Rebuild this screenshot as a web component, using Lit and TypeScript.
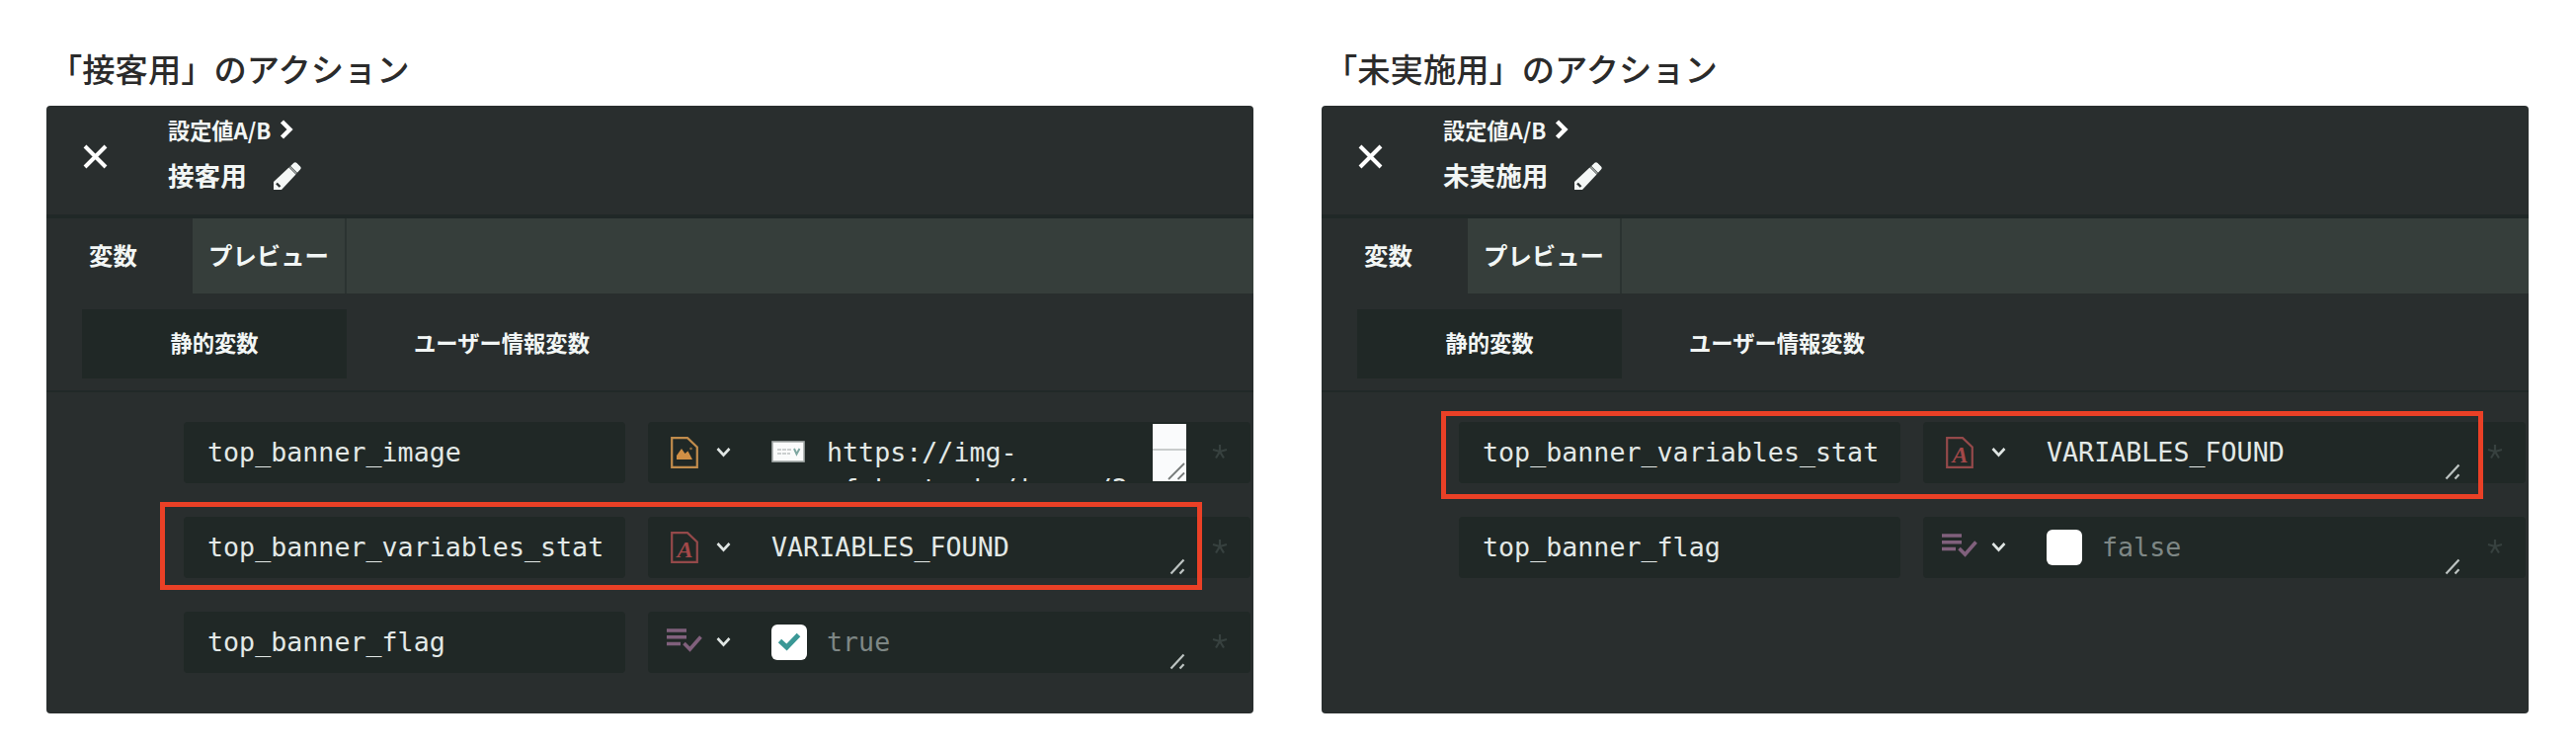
import { LitElement, html, css, svg, nothing } from 'lit';
import { customElement, property } from 'lit/decorators.js';

type VariableType = 'image' | 'text' | 'boolean';

interface Variable {
  name: string;
  type: VariableType;
  value: string | boolean;
  marked?: boolean;
}

const CLOSE = svg`<path d="M2 2 L23 23 M23 2 L2 23" stroke="#fff" stroke-width="4" />`;

@customElement('type-icon')
export class TypeIcon extends LitElement {
  static styles = css`
    :host {
      display: block;
      width: 38px;
      height: 36px;
    }

    svg {
      display: block;
    }

    .letter {
      font: italic bold 24px 'Liberation Serif', serif;
    }
  `;

  @property() type: VariableType = 'text';

  _page(color: string) {
    return svg`<path d="M6.2 3.2 H22 L31.8 12.4 V32.8 H6.2 Z" fill="none" stroke=${color} stroke-width="2.2" />`;
  }

  _shape() {
    switch (this.type) {
      case 'image':
        return svg`
          ${this._page('#c18c4c')}
          <path d="M11 25 V21 L16 14 L19.5 19 L22.5 16.5 L27 25 Z" fill="#d08f45" />
          <circle cx="25.5" cy="14" r="1.3" fill="#8c6a3e" />`;
      case 'boolean':
        return svg`
          <path d="M1 6 H21 M1 12.7 H21 M1 19.5 H15" stroke="#80607c" stroke-width="3.4" />
          <path d="M18.5 19 L24.5 25 L35.5 12.5" fill="none" stroke="#80607c" stroke-width="3.6" />`;
      default:
        return svg`
          ${this._page('#94494a')}
          <text class="letter" x="11.5" y="27.5" fill="#a34849">A</text>`;
    }
  }

  render() {
    return html`<svg width="38" height="36" viewBox="0 0 38 36">${this._shape()}</svg>`;
  }
}

@customElement('variable-row')
export class VariableRow extends LitElement {
  static styles = css`
    :host {
      display: flex;
      position: relative;
      gap: 23px;
      height: 62px;
      font-family: 'DejaVu Sans Mono', monospace;
      font-size: 26.67px;
      font-weight: 400;
      line-height: 37px;
      color: #e3e9e7;
    }

    svg {
      display: block;
    }

    .name,
    .value {
      box-sizing: border-box;
      height: 62px;
      background: #202826;
      border-radius: 4px;
      overflow: hidden;
    }

    .name {
      width: 447px;
      padding: 12px 20px 0 24px;
    }

    .value {
      display: flex;
      width: 610px;
      padding-left: 18px;
    }

    type-icon {
      margin-top: 13px;
    }

    .arrow {
      margin: 25px 41px 0 13px;
      width: 15px;
      height: 11px;
    }

    .content {
      display: flex;
      width: 386px;
      height: 60px;
    }

    .string {
      padding-top: 12px;
      white-space: pre;
    }

    .url {
      width: 329px;
      height: 48px;
      overflow: hidden;
    }

    .thumb {
      flex: none;
      margin: 19px 22px 0 0;
    }

    .check {
      flex: none;
      box-sizing: border-box;
      width: 36px;
      height: 36px;
      margin: 13px 20px 0 0;
      border-radius: 6px;
      background: #fff;
    }

    .flag {
      color: #7e8785;
    }

    .scroll {
      flex: none;
      width: 34px;
      height: 58px;
      margin-top: 2px;
      background: linear-gradient(#c9cccc, #c9cccc) 0 25px / 100% 2px no-repeat #fafbfc;
    }

    .end {
      display: flex;
      width: 34px;
    }

    .grip {
      align-self: flex-end;
      margin-bottom: 3px;
    }

    .required {
      flex: none;
      margin: 22px 0 0 26px;
    }

    .mark {
      position: absolute;
      box-sizing: border-box;
      width: 1055px;
      height: 89px;
      border: 5px solid #ea4026;
    }

    .mark.middle {
      left: -24px;
      top: -15px;
    }

    .mark.first {
      left: -18px;
      top: -11px;
    }
  `;

  @property({ attribute: false }) variable!: Variable;
  @property({ type: Boolean }) first = false;

  _content() {
    const { type, value } = this.variable;

    if (type === 'image') {
      return html`
        <svg class="thumb" width="34" height="22" viewBox="0 0 34 22">
          <rect x="1" y="1" width="32" height="20" fill="#fafbfb" stroke="#a7adac" stroke-width="1.6" />
          <path d="M6 9 H20 M6 13 H19" stroke="#bcc1c1" stroke-width="1.6" stroke-dasharray="4 1" />
          <path d="M23 8 L25.5 13.5 L28.5 8" fill="none" stroke="#7fa8a2" stroke-width="2" />
        </svg>
        <div class="string url">${value}</div>
      `;
    }

    if (type === 'boolean') {
      return html`
        <div class="check">
          ${value
            ? html`<svg width="36" height="36" viewBox="0 0 36 36">
                <path d="M8.5 16.5 L15.5 23 L27.5 10.5" fill="none" stroke="#3b9896" stroke-width="5" />
              </svg>`
            : nothing}
        </div>
        <div class="string flag">${String(value)}</div>
      `;
    }

    return html`<div class="string">${value}</div>`;
  }

  _end() {
    if (this.variable.type === 'image') {
      return html`
        <div class="scroll">
          <svg width="34" height="58" viewBox="0 0 34 58">
            <path d="M16 56 L32 40 M25.5 56 L32 49.5" stroke="#777b7a" stroke-width="1.8" />
          </svg>
        </div>
      `;
    }
    return html`
      <svg class="grip" width="34" height="17" viewBox="0 0 34 17">
        <path d="M18.5 15.5 L31.5 1.5 M27.5 15.5 L31.5 11.2" stroke="#bcc3c1" stroke-width="2.2" />
      </svg>
    `;
  }

  render() {
    const { name, type, marked } = this.variable;
    return html`
      <div class="name">${name}</div>
      <div class="value">
        <type-icon .type=${type}></type-icon>
        <svg class="arrow" viewBox="0 0 15 11">
          <path d="M1.5 2 L7.5 8.5 L13.5 2" fill="none" stroke="#dfe5e3" stroke-width="2.6" />
        </svg>
        <div class="content">${this._content()}</div>
        <div class="end">${this._end()}</div>
        <svg class="required" width="16" height="16" viewBox="0 0 16 16">
          <path d="M8 8 V1 M8 8 L1 6 M8 8 L15 6 M8 8 L4 14.5 M8 8 L12 14.5" stroke="#37413f" stroke-width="2.2" />
        </svg>
      </div>
      ${marked ? html`<div class="mark ${this.first ? 'first' : 'middle'}"></div>` : nothing}
    `;
  }
}

@customElement('action-panel')
export class ActionPanel extends LitElement {
  static styles = css`
    :host {
      display: block;
      width: 1222px;
      font-family: 'Noto Sans CJK JP', sans-serif;
      white-space: nowrap;
    }

    h2 {
      margin: 0;
      height: 107px;
      padding: 44px 0 0 3px;
      box-sizing: border-box;
      font-size: 33.3px;
      font-weight: 500;
      line-height: 50px;
      color: #2b2b2b;
    }

    .panel {
      height: 615px;
      border-radius: 4px;
      background: #292e2e;
      color: #f2f6f5;
      font-weight: 700;
      overflow: hidden;
    }

    header {
      display: flex;
      height: 110px;
      padding-left: 37px;
      border-bottom: 4px solid #202827;
    }

    .close {
      margin: 39px 61px 0 0;
    }

    .parent {
      display: flex;
      align-items: center;
      gap: 9px;
      height: 34px;
      padding-top: 7px;
      font-size: 22.2px;
    }

    .current {
      display: flex;
      align-items: center;
      gap: 27px;
      height: 50px;
      padding-top: 3px;
      font-size: 26.6px;
    }

    .pencil {
      margin-top: 3px;
    }

    .tabs {
      display: flex;
      height: 76px;
      background: #363e3b;
      font-size: 24.4px;
      line-height: 73px;
    }

    .tab {
      box-sizing: border-box;
      padding-left: 16px;
      width: 156px;
      border-right: 2px solid #2b3331;
    }

    .tab.active {
      width: 148px;
      padding-left: 43px;
      border: none;
      background: #292e2e;
    }

    .scopes {
      display: flex;
      height: 82px;
      padding: 16px 0 0 36px;
      border-bottom: 2px solid #212928;
      font-size: 22.3px;
      line-height: 66px;
    }

    .scope {
      height: 70px;
      width: 268px;
      text-align: center;
    }

    .scope.active {
      background: #202826;
    }

    .scope + .scope {
      width: 314px;
    }

    .rows {
      display: grid;
      gap: 34px;
      padding: 30px 0 0 139px;
    }
  `;

  @property() name = '';
  @property({ attribute: false }) variables: Variable[] = [];

  render() {
    return html`
      <h2>「${this.name}」のアクション</h2>
      <div class="panel">
        <header>
          <svg class="close" width="25" height="25" viewBox="0 0 25 25">${CLOSE}</svg>
          <div>
            <div class="parent">
              設定値A/B
              <svg width="14" height="20" viewBox="0 0 14 20">
                <path d="M2.5 2 L10.5 10 L2.5 18" fill="none" stroke="#fff" stroke-width="4.4" />
              </svg>
            </div>
            <div class="current">
              ${this.name}
              <svg class="pencil" width="28" height="28" viewBox="0 0 28 28">
                <path d="M0 28 V20 L15.5 5.5 L22.5 12.5 L8 28 Z" fill="#f4f7f6" />
                <path d="M17.2 4 L20.5 0.8 Q22 -0.4 23.5 1 L27 4.6 Q28.4 6 27 7.6 L24 10.8 Z" fill="#f4f7f6" />
                <path d="M16.4 4.8 L23.2 11.6" stroke="#9ba19f" stroke-width="1.6" />
                <path d="M3 21.5 L6.5 25" stroke="#292e2e" stroke-width="2.4" />
              </svg>
            </div>
          </div>
        </header>
        <div class="tabs">
          <div class="tab active">変数</div>
          <div class="tab">プレビュー</div>
        </div>
        <div class="scopes">
          <div class="scope active">静的変数</div>
          <div class="scope">ユーザー情報変数</div>
        </div>
        <div class="rows">
          ${this.variables.map(
            (variable, i) => html`<variable-row .variable=${variable} ?first=${i === 0}></variable-row>`
          )}
        </div>
      </div>
    `;
  }
}

@customElement('app-root')
export class AppRoot extends LitElement {
  static styles = css`
    :host {
      display: flex;
      gap: 69px;
      box-sizing: border-box;
      height: 760px;
      padding-left: 47px;
      background: #fff;
      overflow: hidden;
    }
  `;

  served: Variable[] = [
    { name: 'top_banner_image', type: 'image', value: 'https://img-\ncf.karte.io/image/2' },
    { name: 'top_banner_variables_stat', type: 'text', value: 'VARIABLES_FOUND', marked: true },
    { name: 'top_banner_flag', type: 'boolean', value: true },
  ];

  unserved: Variable[] = [
    { name: 'top_banner_variables_stat', type: 'text', value: 'VARIABLES_FOUND', marked: true },
    { name: 'top_banner_flag', type: 'boolean', value: false },
  ];

  render() {
    return html`
      <action-panel name="接客用" .variables=${this.served}></action-panel>
      <action-panel name="未実施用" .variables=${this.unserved}></action-panel>
    `;
  }
}
